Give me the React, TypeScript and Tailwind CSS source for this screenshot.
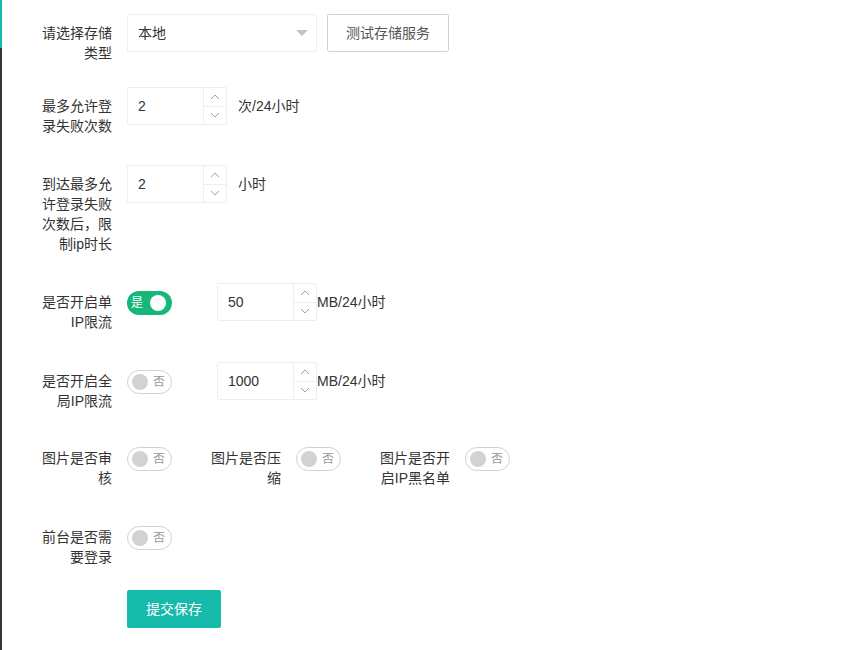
import type { ReactNode } from "react";

const font = {
  fontFamily: '"Liberation Sans", "Noto Sans CJK SC", sans-serif',
};

function Label({ children }: { children: ReactNode }) {
  return (
    <div className="w-[110px] shrink-0 px-[15px] py-[9px] text-right text-[14px] leading-[20px] text-[#333]">
      {children}
    </div>
  );
}

function Chevron({ up }: { up?: boolean }) {
  return (
    <svg width="10" height="6" viewBox="0 0 10 6" fill="none">
      <polyline
        points={up ? "1,5 5,1 9,5" : "1,1 5,5 9,1"}
        stroke="#a0a0a0"
        strokeWidth="1"
      />
    </svg>
  );
}

function NumberInput({ value }: { value: string }) {
  return (
    <div className="flex h-[38px] w-[100px] shrink-0 rounded-[2px] border border-[#eee] bg-white">
      <div className="flex flex-1 items-center pl-[10px] text-[14px] text-[#333]">
        {value}
      </div>
      <div className="flex w-[23px] flex-col border-l border-[#eee]">
        <div className="flex flex-1 items-center justify-center border-b border-[#eee]">
          <Chevron up />
        </div>
        <div className="flex flex-1 items-center justify-center">
          <Chevron />
        </div>
      </div>
    </div>
  );
}

function Switch({ on }: { on?: boolean }) {
  if (on) {
    return (
      <div className="mt-[8px] flex h-[24px] w-[45px] items-center justify-between rounded-full bg-[#16b777] pl-[4px] pr-[6px]">
        <span className="text-[12px] leading-none text-white">是</span>
        <span className="h-[16px] w-[16px] rounded-full bg-white" />
      </div>
    );
  }
  return (
    <div className="mt-[8px] flex h-[24px] w-[45px] items-center justify-between rounded-full border border-[#d2d2d2] bg-white pl-[4px] pr-[6px]">
      <span className="h-[16px] w-[16px] rounded-full bg-[#d2d2d2]" />
      <span className="text-[12px] leading-none text-[#999]">否</span>
    </div>
  );
}

export default function App() {
  return (
    <div className="flex min-h-screen bg-white" style={font}>
      <div className="flex w-[2px] shrink-0 flex-col">
        <div className="h-[48px] bg-[#16baaa]" />
        <div className="flex-1 bg-[#2f363c]" />
      </div>

      <div className="flex-1 pl-[15px] pt-[14px]">
        <div className="mb-[15px] flex items-start">
          <Label>请选择存储类型</Label>
          <div className="flex h-[38px] w-[190px] items-center justify-between rounded-[2px] border border-[#eee] pl-[10px] pr-[8px] text-[14px] text-[#333]">
            <span>本地</span>
            <span className="h-0 w-0 border-x-[6px] border-t-[6px] border-x-transparent border-t-[#c2c2c2]" />
          </div>
          <button className="ml-[10px] h-[38px] rounded-[2px] border border-[#d2d2d2] bg-white px-[18px] text-[14px] text-[#555]">
            测试存储服务
          </button>
        </div>

        <div className="mb-[20px] flex items-start">
          <Label>最多允许登录失败次数</Label>
          <NumberInput value="2" />
          <span className="ml-[11px] flex h-[38px] items-center text-[14px] text-[#333]">
            次/24小时
          </span>
        </div>

        <div className="mb-[20px] flex items-start">
          <Label>到达最多允许登录失败次数后，限制ip时长</Label>
          <NumberInput value="2" />
          <span className="ml-[11px] flex h-[38px] items-center text-[14px] text-[#333]">
            小时
          </span>
        </div>

        <div className="mb-[21px] flex items-start">
          <Label>是否开启单IP限流</Label>
          <div className="w-[90px] shrink-0">
            <Switch on />
          </div>
          <NumberInput value="50" />
          <span className="flex h-[38px] items-center text-[14px] text-[#333]">
            MB/24小时
          </span>
        </div>

        <div className="mb-[19px] flex items-start">
          <Label>是否开启全局IP限流</Label>
          <div className="w-[90px] shrink-0">
            <Switch />
          </div>
          <NumberInput value="1000" />
          <span className="flex h-[38px] items-center text-[14px] text-[#333]">
            MB/24小时
          </span>
        </div>

        <div className="mb-[21px] flex items-start">
          <Label>图片是否审核</Label>
          <div className="w-[59px] shrink-0">
            <Switch />
          </div>
          <Label>图片是否压缩</Label>
          <div className="w-[59px] shrink-0">
            <Switch />
          </div>
          <Label>图片是否开启IP黑名单</Label>
          <div className="w-[59px] shrink-0">
            <Switch />
          </div>
        </div>

        <div className="mb-[14px] flex items-start">
          <Label>前台是否需要登录</Label>
          <Switch />
        </div>

        <div className="pl-[110px]">
          <button className="h-[38px] w-[94px] rounded-[2px] bg-[#16baaa] text-[14px] text-white">
            提交保存
          </button>
        </div>
      </div>
    </div>
  );
}
